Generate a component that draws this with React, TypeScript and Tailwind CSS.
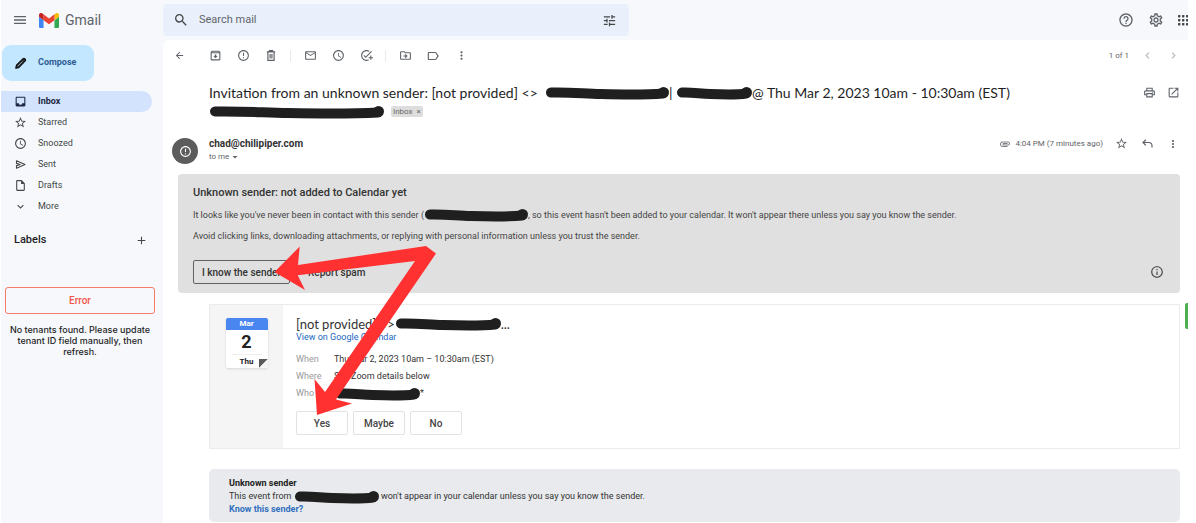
import type { ReactNode } from 'react';
import {
  MdAccessTime,
  MdAdd,
  MdAddTask,
  MdArrowBack,
  MdArrowDropDown,
  MdAttachment,
  MdChevronLeft,
  MdChevronRight,
  MdErrorOutline,
  MdExpandMore,
  MdHelpOutline,
  MdInbox,
  MdInfoOutline,
  MdLabelOutline,
  MdMailOutline,
  MdMenu,
  MdMoreVert,
  MdOpenInNew,
  MdOutlineArchive,
  MdOutlineDriveFileMove,
  MdOutlineInsertDriveFile,
  MdOutlinePrint,
  MdOutlineSettings,
  MdSearch,
  MdStarBorder,
  MdTune,
} from 'react-icons/md';

interface NavItem {
  label: string;
  icon: ReactNode;
  active?: boolean;
}

const navItems: NavItem[] = [
  { label: 'Inbox', icon: <MdInbox size={13} />, active: true },
  { label: 'Starred', icon: <MdStarBorder size={13} /> },
  { label: 'Snoozed', icon: <MdAccessTime size={13} /> },
  { label: 'Sent', icon: <SentIcon /> },
  { label: 'Drafts', icon: <MdOutlineInsertDriveFile size={13} /> },
  { label: 'More', icon: <MdExpandMore size={13} /> },
];

function IconButton({ label, children }: { label: string; children: ReactNode }) {
  return (
    <button type="button" aria-label={label} className="flex w-4 shrink-0 items-center justify-center">
      {children}
    </button>
  );
}

// Marker stroke that hides a name or an address
function Redacted({ width }: { width: number }) {
  return (
    <svg
      width={width}
      height="14"
      viewBox={`0 0 ${width} 14`}
      className="inline-block shrink-0 align-middle"
      aria-hidden="true"
    >
      <path
        d={`M6 6.5 C${width * 0.2} 6 ${width * 0.3} 7.5 ${width * 0.45} 8 S${width * 0.8} 9 ${width - 6} 7.5`}
        fill="none"
        stroke="#1f1f1f"
        strokeWidth="10"
        strokeLinecap="round"
      />
      <circle cx={width - 5.5} cy="6.5" r="5.5" fill="#1f1f1f" />
    </svg>
  );
}

function GmailLogo() {
  return (
    <svg width="20" height="15" viewBox="52 42 88 66" aria-hidden="true">
      <path fill="#4285f4" d="M58 108h14V74L52 59v43c0 3.32 2.69 6 6 6" />
      <path fill="#34a853" d="M120 108h14c3.32 0 6-2.69 6-6V59l-20 15" />
      <path fill="#fbbc04" d="M120 48v26l20-15v-8c0-7.42-8.47-11.65-14.4-7.2" />
      <path fill="#ea4335" d="M72 74V48l24 18 24-18v26L96 92" />
      <path fill="#c5221f" d="M52 51v8l20 15V48l-5.6-4.2c-5.94-4.45-14.4-.22-14.4 7.2" />
    </svg>
  );
}

function SentIcon() {
  return (
    <svg width="13" height="13" viewBox="0 0 13 13" fill="none" stroke="currentColor" strokeWidth="1.1" aria-hidden="true">
      <path d="M2.500 2.800L11 6.500l-8.500 3.700V7.600l3.700-1.100-3.700-1.100z" strokeLinejoin="round" />
    </svg>
  );
}

function TrashIcon() {
  return (
    <svg width="10" height="11" viewBox="0 0 10 11" fill="none" stroke="#5f6368" strokeWidth="1.2" aria-hidden="true">
      <path d="M.8 1.9h8.4M3.4 1.6V.7h3.2v.9M1.9 2v8.3h6.2V2M4.1 4v4.6M5.9 4v4.6" />
    </svg>
  );
}

function ReplyIcon() {
  return (
    <svg width="11" height="9" viewBox="0 0 11 9" fill="none" stroke="#5f6368" strokeWidth="1.2" aria-hidden="true">
      <path d="M3.8.8L1 3.5l2.8 2.7M1.2 3.5h5.6c2 0 3.2 1.200 3.2 3.200V8.400" />
    </svg>
  );
}

function Header() {
  return (
    <header className="flex h-10 items-center">
      <div className="flex w-[162px] shrink-0 items-center gap-2 pl-[11px]">
        <IconButton label="Main menu">
          <MdMenu size={16} color="#5f6368" />
        </IconButton>
        <div className="flex items-center gap-[6px] pl-[3px]">
          <GmailLogo />
          <span className="text-[14px] text-[#5f6368]">Gmail</span>
        </div>
      </div>
      <form className="flex h-8 w-[466px] items-center rounded-sm bg-[#e9f0fc] pr-3 pl-[10px] text-[#444746]">
        <IconButton label="Search">
          <MdSearch size={16} />
        </IconButton>
        <input
          type="text"
          aria-label="Search mail"
          placeholder="Search mail"
          className="ml-[10px] min-w-0 flex-1 bg-transparent text-[11px] outline-none placeholder:text-[#5f6368]"
        />
        <IconButton label="Show search options">
          <MdTune size={15} />
        </IconButton>
      </form>
      <div className="ml-auto flex items-center gap-[14px] text-[#5f6368]">
        <IconButton label="Support">
          <MdHelpOutline size={16} />
        </IconButton>
        <IconButton label="Settings">
          <MdOutlineSettings size={16} />
        </IconButton>
        <button type="button" aria-label="Google apps">
          <svg width="10" height="12" viewBox="0 0 10 12" fill="#444746">
            {[0, 4, 8].map((y) => [0, 4, 8].map((x) => <rect key={`${x}-${y}`} x={x} y={y + 1} width="2.4" height="2.4" rx="0.6" />))}
          </svg>
        </button>
      </div>
    </header>
  );
}

function Sidebar() {
  return (
    <aside className="w-[162px] shrink-0">
      <button
        type="button"
        className="mt-[5px] ml-px flex h-9 w-[92px] items-center gap-[11px] rounded-[9px] bg-[#c2e7ff] pl-3 text-[9px] font-bold text-[#2f5c93]"
      >
        <svg width="13" height="13" viewBox="0 0 14 14" aria-hidden="true">
          <path d="M2 12l.7-3L9.6 2.1a1.4 1.4 0 0 1 2.2 2.2L5 11.3z" fill="#3c4043" stroke="#111" strokeWidth="1.5" strokeLinejoin="round" />
          <path d="M4 10l5-5" stroke="#a9c7d8" strokeWidth="0.8" />
        </svg>
        Compose
      </button>
      <nav className="mt-[10px] pr-[11px]">
        {navItems.map(({ label, icon, active }) => (
          <a
            key={label}
            href="#"
            className={`flex h-[21px] items-center gap-[11px] rounded-r-full pl-[13px] text-[9px] ${
              active ? 'bg-[#d3e3fd] font-bold text-[#1f2a44]' : 'text-[#444746]'
            }`}
          >
            {icon}
            {label}
          </a>
        ))}
      </nav>
      <div className="mt-[13px] flex h-5 items-center justify-between pr-[14px] pl-[13px]">
        <h2 className="text-[11px] font-medium text-[#1f1f1f]">Labels</h2>
        <IconButton label="Create new label">
          <MdAdd size={13} color="#444746" />
        </IconButton>
      </div>
      <div className="mt-[37px] pr-2 pl-1">
        <button type="button" className="h-[27px] w-full rounded-[3px] border border-[#f77b6c] text-[10px] font-medium text-[#f2564a]">
          Error
        </button>
        <p className="mt-[10px] text-center font-['Inter',sans-serif] text-[9px] leading-[11px] font-medium text-[#1f1f1f]">
          No tenants found. Please update tenant ID field manually, then refresh.
        </p>
      </div>
    </aside>
  );
}

function Toolbar() {
  return (
    <div className="flex h-[31px] items-center pr-[7px] pl-2 text-[#5f6368]">
      <IconButton label="Back">
        <MdArrowBack size={11} />
      </IconButton>
      <div className="ml-5 flex items-center gap-3">
        <IconButton label="Archive">
          <MdOutlineArchive size={13} />
        </IconButton>
        <IconButton label="Report spam">
          <MdErrorOutline size={13} />
        </IconButton>
        <IconButton label="Delete">
          <TrashIcon />
        </IconButton>
      </div>
      <span className="mx-[11px] h-3 w-px bg-[#e8eaed]" />
      <div className="flex items-center gap-3">
        <IconButton label="Mark as unread">
          <MdMailOutline size={13} />
        </IconButton>
        <IconButton label="Snooze">
          <MdAccessTime size={13} />
        </IconButton>
        <IconButton label="Add to tasks">
          <MdAddTask size={13} />
        </IconButton>
      </div>
      <span className="mx-[11px] h-3 w-px bg-[#e8eaed]" />
      <div className="flex items-center gap-3">
        <IconButton label="Move to">
          <MdOutlineDriveFileMove size={13} />
        </IconButton>
        <IconButton label="Labels">
          <MdLabelOutline size={14} />
        </IconButton>
        <IconButton label="More">
          <MdMoreVert size={13} />
        </IconButton>
      </div>
      <div className="ml-auto flex items-center gap-[10px] text-[8px]">
        <span>1 of 1</span>
        <IconButton label="Newer">
          <MdChevronLeft size={13} color="#b4b7bb" />
        </IconButton>
        <IconButton label="Older">
          <MdChevronRight size={13} color="#b4b7bb" />
        </IconButton>
      </div>
    </div>
  );
}

function Subject() {
  return (
    <div className="mt-3 flex items-start pr-[7px] pl-[46px]">
      <h1 className="font-['Lato',sans-serif] text-[14px] leading-[19px] text-[#1f1f1f]">
        <span className="flex items-center whitespace-pre">
          Invitation from an unknown sender: [not provided] {'<>  '}
          <Redacted width={124} />
          {'| '}
          <Redacted width={76} />
          {'@ Thu Mar 2, 2023 10am - 10:30am (EST)'}
        </span>
        <span className="flex h-[19px] items-center">
          <Redacted width={175} />
          <span className="ml-[7px] flex items-center gap-1 rounded-[2px] bg-[#dddddd] px-[2px] font-['Roboto',sans-serif] text-[8px] leading-[11px] text-[#666666]">
            Inbox
            <button type="button" aria-label="Remove label Inbox">
              ×
            </button>
          </span>
        </span>
      </h1>
      <div className="ml-auto flex h-[19px] items-center gap-2 text-[#5f6368]">
        <IconButton label="Print all">
          <MdOutlinePrint size={13} />
        </IconButton>
        <IconButton label="In new window">
          <MdOpenInNew size={13} />
        </IconButton>
      </div>
    </div>
  );
}

function SenderRow() {
  return (
    <div className="mt-4 flex items-start pr-[7px] pl-[9px]">
      <span className="mt-px flex size-[26px] items-center justify-center rounded-full bg-[#5c5c5c] text-white">
        <MdErrorOutline size={13} />
      </span>
      <div className="ml-[11px]">
        <p className="text-[10px] leading-[13px] font-bold text-[#333333]">chad@chilipiper.com</p>
        <p className="flex items-center text-[8px] leading-[13px] text-[#5f6368]">
          to me
          <MdArrowDropDown size={12} />
        </p>
      </div>
      <div className="ml-auto flex items-center gap-[10px] text-[#5f6368]">
        <span className="flex items-center gap-1 text-[8px] leading-[13px]">
          <MdAttachment size={12} color="#7d8084" />
          4:04 PM (7 minutes ago)
        </span>
        <IconButton label="Star">
          <MdStarBorder size={13} />
        </IconButton>
        <IconButton label="Reply">
          <ReplyIcon />
        </IconButton>
        <IconButton label="More">
          <MdMoreVert size={12} />
        </IconButton>
      </div>
    </div>
  );
}

function SenderWarning() {
  return (
    <section className="mt-[10px] mr-2 ml-[15px] rounded-[4px] bg-[#e0e0e0] px-[15px] pt-[11px] pb-[9px] text-[9px] text-[#444444]">
      <h2 className="text-[11px] leading-4 font-medium text-[#333333]">Unknown sender: not added to Calendar yet</h2>
      <p className="mt-[6px] flex items-center leading-4 whitespace-pre">
        It looks like you've never been in contact with this sender (
        <Redacted width={104} />
        , so this event hasn't been added to your calendar. It won't appear there unless you say you know the sender.
      </p>
      <p className="mt-[5px] leading-4">
        Avoid clicking links, downloading attachments, or replying with personal information unless you trust the sender.
      </p>
      <div className="mt-4 flex items-center">
        <button type="button" className="h-6 w-[97px] rounded-[2px] border border-[#5f6368] text-[10px] font-medium whitespace-nowrap text-[#333333]">
          I know the sender
        </button>
        <button type="button" className="ml-[18px] text-[10px] font-medium text-[#333333]">
          Report spam
        </button>
        <button type="button" aria-label="More information" className="ml-auto">
          <MdInfoOutline size={14} color="#444746" className="mr-px" />
        </button>
      </div>
    </section>
  );
}

function CalendarIcon() {
  return (
    <div className="w-[42px] rounded-[2px] bg-white text-center text-[#222222] shadow-sm">
      <p className="rounded-t-[2px] bg-[#4a86f0] text-[8px] leading-3 font-bold text-white">Mar</p>
      <p className="mx-[6px] border-b border-[#eeeeee] text-[18px] leading-6 font-bold">2</p>
      <p className="relative text-[8px] leading-[13px] font-bold">
        Thu
        <svg width="9" height="9" viewBox="0 0 9 9" className="absolute right-0 bottom-0" aria-hidden="true">
          <path d="M0 0h9L0 9z" fill="#5a5a5a" />
          <path d="M9 0v9H0z" fill="#f5f5f5" />
        </svg>
      </p>
    </div>
  );
}

function EventCard() {
  return (
    <section className="mt-[11px] mr-2 ml-[46px] flex border border-[#ebebeb]">
      <div className="flex w-[73px] shrink-0 items-start justify-center bg-[#f5f5f5] pt-[13px]">
        <CalendarIcon />
      </div>
      <div className="pt-3 pb-[13px] pl-[13px] text-[9px] text-[#333333]">
        <h3 className="flex items-center font-['Lato',sans-serif] text-[13px] leading-[14px] whitespace-pre">
          {'[not provided] <>'}
          <Redacted width={106} />
          ...
        </h3>
        <a href="#" className="block leading-3 text-[#1967c0]">
          View on Google Calendar
        </a>
        <dl className="mt-2 grid grid-cols-[38px_auto] leading-[17px]">
          <dt className="text-[#999999]">When</dt>
          <dd>Thu Mar 2, 2023 10am – 10:30am (EST)</dd>
          <dt className="text-[#999999]">Where</dt>
          <dd>See Zoom details below</dd>
          <dt className="text-[#999999]">Who</dt>
          <dd className="flex items-center">
            <Redacted width={86} />*
          </dd>
        </dl>
        <div className="mt-[9px] flex gap-[5px]">
          {['Yes', 'Maybe', 'No'].map((answer) => (
            <button
              key={answer}
              type="button"
              className="h-6 w-[52px] rounded-[2px] border border-[#e2e2e2] bg-white text-[10px] font-medium text-[#444444]"
            >
              {answer}
            </button>
          ))}
        </div>
      </div>
    </section>
  );
}

function SenderNotice() {
  return (
    <section className="mt-5 mr-2 ml-[46px] rounded-[5px] bg-[#e8eaed] px-5 pt-2 pb-[6px] text-[9px] leading-[13px] text-[#333333]">
      <h3 className="font-bold text-[#222222]">Unknown sender</h3>
      <p className="flex h-[13px] items-center whitespace-pre">
        {'This event from '}
        <Redacted width={85} />
        {" won't appear in your calendar unless you say you know the sender."}
      </p>
      <a href="#" className="block font-bold text-[#3270bd]">
        Know this sender?
      </a>
    </section>
  );
}

function Arrows() {
  return (
    <svg width="170" height="175" viewBox="270 243 170 175" className="pointer-events-none absolute top-[243px] left-[270px]" aria-hidden="true">
      <path
        d="M426 246L436 253.500L336 399.500L352 403.500L317 415L314.500 379L325 392L415 261L297.700 275.300L305 290L274.500 272L299.700 246.500L298 265Z"
        fill="#ff3131"
      />
    </svg>
  );
}

export default function App() {
  return (
    <div className="relative min-h-screen bg-white pr-2 pl-px font-['Roboto',sans-serif]">
      <div className="flex min-h-screen flex-col bg-[#f6f8fc]">
        <Header />
        <div className="flex flex-1">
          <Sidebar />
          <main className="relative min-w-0 flex-1 rounded-tl-md bg-white">
            <Toolbar />
            <Subject />
            <SenderRow />
            <SenderWarning />
            <EventCard />
            <SenderNotice />
            <button
              type="button"
              aria-label="Open side panel"
              className="absolute top-[263px] right-0 h-[26px] w-[3px] rounded-l-[2px] bg-[#4caf50]"
            />
          </main>
        </div>
      </div>
      <Arrows />
    </div>
  );
}
